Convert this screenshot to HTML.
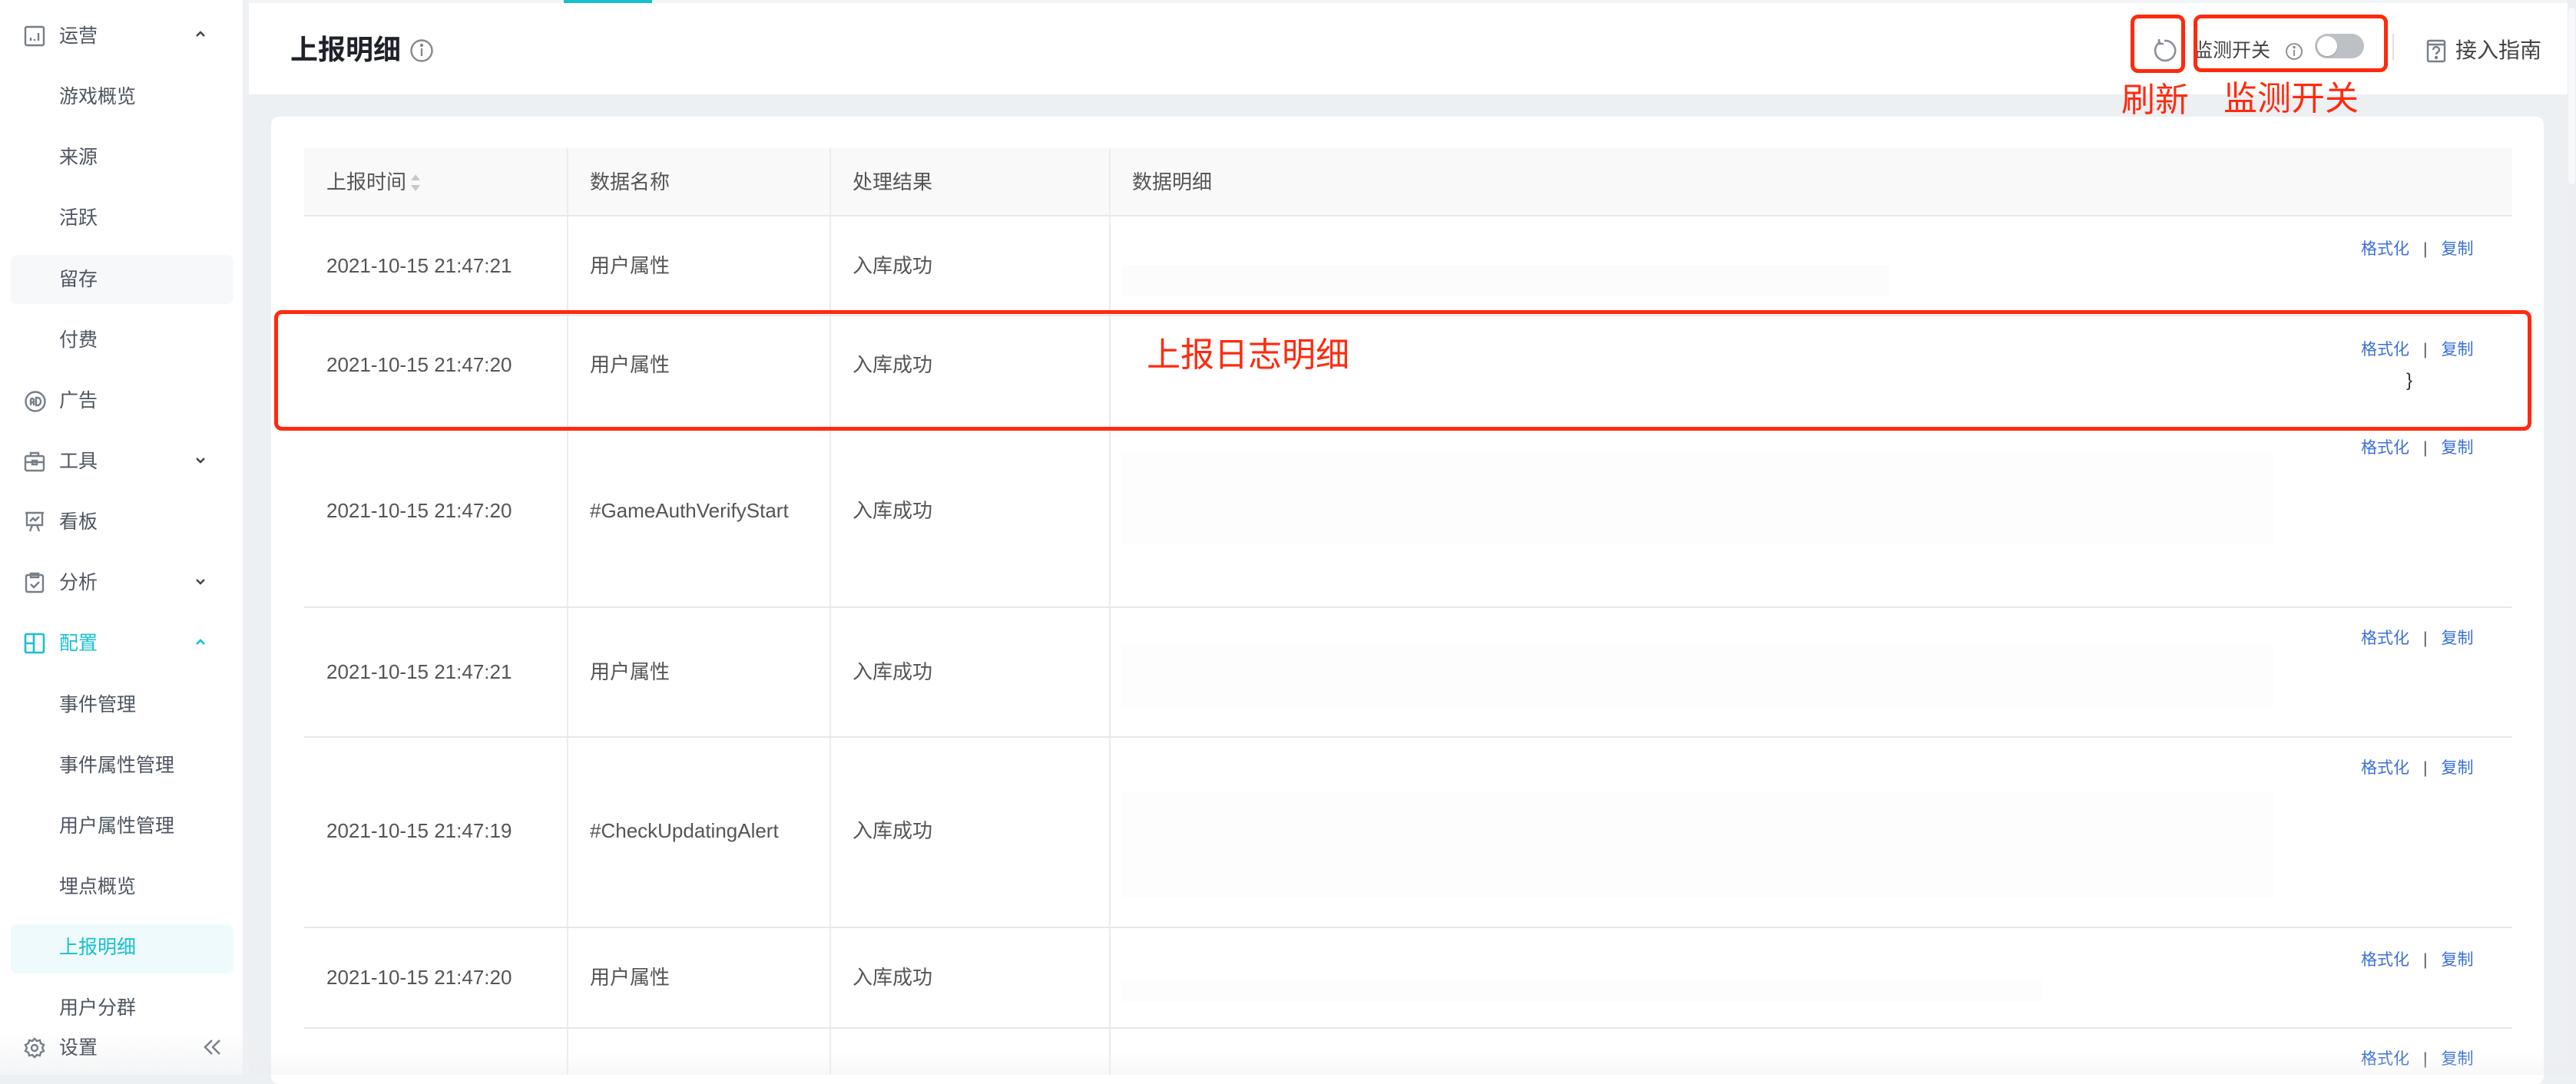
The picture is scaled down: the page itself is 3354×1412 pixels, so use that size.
<!DOCTYPE html>
<html><head><meta charset="utf-8"><style>
*{margin:0;padding:0;box-sizing:border-box}
body{width:3354px;height:1400px;overflow:hidden;background:#edf0f3;font-family:"Liberation Sans","Noto Sans CJK SC",sans-serif;position:relative;color:#333}
.a{position:absolute;white-space:nowrap}
.side{position:absolute;left:0;top:0;width:316px;height:1400px;background:#fff}
.si{position:absolute;left:77px;font-size:25px;color:#4e5560;line-height:40px}
.ic{position:absolute;left:31px}
.arr{position:absolute;left:252px}
.hd{position:absolute;left:324px;top:4px;width:3019px;height:119px;background:#fff}
.card{position:absolute;left:353px;top:152px;width:2959px;height:1260px;background:#fff;border-radius:10px}
.th{position:absolute;top:193px;height:89px;background:#f9f9f9;left:396px;width:2875px;border-bottom:2px solid #e8e8e8}
.tt{position:absolute;font-size:26px;color:#555;line-height:30px}
.rl{position:absolute;left:396px;width:2875px;height:2px;background:#e8e8e8}
.vl{position:absolute;width:2px;background:#ececec;top:193px;height:1207px}
.lk{position:absolute;left:3074px;font-size:21px;color:#3b6fd8;line-height:24px}
.lk span{color:#555;margin:0 18px}
.red{position:absolute;border:5px solid #ff2a0e;border-radius:10px}
.rt{position:absolute;color:#ff2a0e;font-size:44px;line-height:50px}
.blk{position:absolute;background:#f7f7f8}
</style></head><body>
<div class="a" style="left:0;top:0;width:3354px;height:4px;background:#f2f5f7"></div>
<div class="a" style="left:734px;top:0;width:115px;height:4px;background:#18c0cf"></div>
<div class="side"></div>
<div class="a" style="left:316px;top:0;width:8px;height:1400px;background:#eef0f3"></div>
<div class="a" style="left:14px;top:332px;width:290px;height:64px;background:#f7f8fa;border-radius:8px"></div>
<div class="a" style="left:14px;top:1204px;width:290px;height:64px;background:#effafc;border-radius:8px"></div>

<svg class="ic" style="top:33px" width="28" height="28" viewBox="0 0 28 28" fill="none" stroke="#777e88" stroke-width="2.4"><rect x="2" y="2" width="24" height="24" rx="2"/><path d="M9 20v-4M14 20v-2M19 20V10"/></svg>
<div class="si" style="top:27px">运营</div>
<svg class="arr" style="top:38px" width="18" height="12" viewBox="0 0 18 12" fill="none" stroke="#444" stroke-width="2.4"><path d="M4 9l5-5 5 5"/></svg>
<div class="si" style="top:106px">游戏概览</div>
<div class="si" style="top:185px">来源</div>
<div class="si" style="top:264px">活跃</div>
<div class="si" style="top:344px">留存</div>
<div class="si" style="top:423px">付费</div>
<svg class="ic" style="top:508px" width="30" height="30" viewBox="0 0 30 30" fill="none" stroke="#777e88" stroke-width="2.4"><circle cx="15" cy="15" r="12.5"/><path d="M9 20v-7a2 2 0 014 0v7M9 16h4M16 10v10h2a4 5 0 000-10z"/></svg>
<div class="si" style="top:502px">广告</div>
<svg class="ic" style="top:587px" width="28" height="28" viewBox="0 0 28 28" fill="none" stroke="#777e88" stroke-width="2.4"><rect x="2" y="7" width="24" height="19" rx="2"/><path d="M9 7V3h10v4M2 15h24"/><rect x="11" y="13" width="6" height="5"/></svg>
<div class="si" style="top:581px">工具</div>
<svg class="arr" style="top:594px" width="18" height="12" viewBox="0 0 18 12" fill="none" stroke="#444" stroke-width="2.4"><path d="M4 3l5 5 5-5"/></svg>
<svg class="ic" style="top:666px" width="28" height="28" viewBox="0 0 28 28" fill="none" stroke="#777e88" stroke-width="2.4"><path d="M2 2h24M4 2v16h20V2M8 13l4-4 3 3 5-5M8 26l3-8M20 26l-3-8"/></svg>
<div class="si" style="top:660px">看板</div>
<svg class="ic" style="top:745px" width="28" height="28" viewBox="0 0 28 28" fill="none" stroke="#777e88" stroke-width="2.4"><rect x="3" y="4" width="22" height="22" rx="2"/><path d="M9 2h10v5H9zM9 16l4 4 7-7"/></svg>
<div class="si" style="top:739px">分析</div>
<svg class="arr" style="top:752px" width="18" height="12" viewBox="0 0 18 12" fill="none" stroke="#444" stroke-width="2.4"><path d="M4 3l5 5 5-5"/></svg>
<svg class="ic" style="top:824px" width="28" height="28" viewBox="0 0 28 28" fill="none" stroke="#18c0cf" stroke-width="2.6"><rect x="2" y="2" width="24" height="24" rx="2"/><path d="M13 2v24M2 14h11"/></svg>
<div class="si" style="top:818px;color:#18c0cf">配置</div>
<svg class="arr" style="top:830px" width="18" height="12" viewBox="0 0 18 12" fill="none" stroke="#18c0cf" stroke-width="2.6"><path d="M4 9l5-5 5 5"/></svg>
<div class="si" style="top:898px">事件管理</div>
<div class="si" style="top:977px">事件属性管理</div>
<div class="si" style="top:1056px">用户属性管理</div>
<div class="si" style="top:1135px">埋点概览</div>
<div class="si" style="top:1214px;color:#18c0cf">上报明细</div>
<div class="si" style="top:1293px">用户分群</div>
<div class="a" style="left:0;top:1330px;width:316px;height:70px;background:linear-gradient(#fff 0,#fff 20%,#f4f5f6 100%)"></div>
<svg class="ic" style="left:31px;top:1351px" width="28" height="28" viewBox="0 0 28 28" fill="none" stroke="#777e88" stroke-width="2.4"><path d="M14 2l3 3 4-1 1 4 4 2-2 4 2 4-4 2-1 4-4-1-3 3-3-3-4 1-1-4-4-2 2-4-2-4 4-2 1-4 4 1z"/><circle cx="14" cy="14" r="4"/></svg>
<div class="si" style="top:1345px">设置</div>
<svg class="a" style="left:264px;top:1352px" width="26" height="24" viewBox="0 0 26 24" fill="none" stroke="#777e88" stroke-width="2.4"><path d="M12 3L3 12l9 9M22 3l-9 9 9 9"/></svg>

<div class="hd"></div>
<div class="a" style="left:378px;top:44px;font-size:36px;font-weight:bold;color:#1f2329;line-height:42px">上报明细</div>
<svg class="a" style="left:533px;top:50px" width="32" height="32" viewBox="0 0 32 32" fill="none" stroke="#888" stroke-width="2.4"><circle cx="16" cy="16" r="13.5"/><path d="M16 13v10"/><circle cx="16" cy="9" r="1" fill="#888"/></svg>
<svg class="a" style="left:2801px;top:49px" width="34" height="34" viewBox="0 0 34 34" fill="none" stroke="#8a9099" stroke-width="2.6"><path d="M12 5.5A13 13 0 1 0 17 4M10 2v6h6"/></svg>
<div class="a" style="left:2856px;top:50px;font-size:25px;color:#444;line-height:32px">监测开关</div>
<svg class="a" style="left:2975px;top:55px" width="24" height="24" viewBox="0 0 24 24" fill="none" stroke="#888" stroke-width="1.8"><circle cx="12" cy="12" r="10"/><path d="M12 10v8"/><circle cx="12" cy="6.5" r=".8" fill="#888"/></svg>
<div class="a" style="left:3014px;top:44px;width:64px;height:32px;background:#bdc1c5;border-radius:16px"></div>
<div class="a" style="left:3017px;top:47px;width:26px;height:26px;background:#fff;border-radius:13px;box-shadow:0 1px 2px rgba(0,0,0,.2)"></div>
<div class="a" style="left:3115px;top:44px;width:2px;height:34px;background:#dcdfe3"></div>
<svg class="a" style="left:3159px;top:50px" width="26" height="32" viewBox="0 0 26 32" fill="none" stroke="#777e88" stroke-width="2.4"><rect x="2" y="3" width="22" height="27" rx="2"/><path d="M2 8h22M9 15a4 4 0 118 0c0 3-4 3-4 6"/><circle cx="13" cy="25" r="1" fill="#777e88"/></svg>
<div class="a" style="left:3197px;top:49px;font-size:28px;color:#444;line-height:34px">接入指南</div>
<div class="a" style="left:3343px;top:0;width:11px;height:1400px;background:#eceef1"></div>
<div class="a" style="left:3344px;top:10px;width:9px;height:230px;background:#f7f8f9;border-radius:4px"></div>

<div class="card"></div>
<div class="th"></div>
<div class="vl" style="left:738px"></div><div class="vl" style="left:1080px"></div><div class="vl" style="left:1444px"></div>
<div class="tt" style="left:425px;top:222px">上报时间</div>
<svg class="a" style="left:533px;top:225px" width="16" height="26" viewBox="0 0 16 26"><path d="M8 2l6 8H2z" fill="#c6c9cc"/><path d="M8 24l6-8H2z" fill="#c6c9cc"/></svg>
<div class="tt" style="left:768px;top:222px">数据名称</div>
<div class="tt" style="left:1110px;top:222px">处理结果</div>
<div class="tt" style="left:1474px;top:222px">数据明细</div>

<div class="rl" style="top:410px"></div><div class="rl" style="top:559px"></div><div class="rl" style="top:790px"></div><div class="rl" style="top:959px"></div><div class="rl" style="top:1207px"></div><div class="rl" style="top:1338px"></div>

<div class="tt" style="left:425px;top:331px">2021-10-15 21:47:21</div><div class="tt" style="left:768px;top:331px">用户属性</div><div class="tt" style="left:1110px;top:331px">入库成功</div>
<div class="tt" style="left:425px;top:460px">2021-10-15 21:47:20</div><div class="tt" style="left:768px;top:460px">用户属性</div><div class="tt" style="left:1110px;top:460px">入库成功</div>
<div class="tt" style="left:425px;top:650px">2021-10-15 21:47:20</div><div class="tt" style="left:768px;top:650px">#GameAuthVerifyStart</div><div class="tt" style="left:1110px;top:650px">入库成功</div>
<div class="tt" style="left:425px;top:860px">2021-10-15 21:47:21</div><div class="tt" style="left:768px;top:860px">用户属性</div><div class="tt" style="left:1110px;top:860px">入库成功</div>
<div class="tt" style="left:425px;top:1067px">2021-10-15 21:47:19</div><div class="tt" style="left:768px;top:1067px">#CheckUpdatingAlert</div><div class="tt" style="left:1110px;top:1067px">入库成功</div>
<div class="tt" style="left:425px;top:1258px">2021-10-15 21:47:20</div><div class="tt" style="left:768px;top:1258px">用户属性</div><div class="tt" style="left:1110px;top:1258px">入库成功</div>

<div class="lk" style="top:313px">格式化<span>|</span>复制</div>
<div class="lk" style="top:444px">格式化<span>|</span>复制</div>
<div class="a" style="left:3133px;top:482px;font-size:24px;color:#333">}</div>
<div class="lk" style="top:572px">格式化<span>|</span>复制</div>
<div class="lk" style="top:820px">格式化<span>|</span>复制</div>
<div class="lk" style="top:989px">格式化<span>|</span>复制</div>
<div class="lk" style="top:1239px">格式化<span>|</span>复制</div>
<div class="lk" style="top:1368px">格式化<span>|</span>复制</div>

<div class="blk" style="left:1460px;top:345px;width:1000px;height:40px;opacity:.35"></div>
<div class="blk" style="left:1460px;top:590px;width:1500px;height:120px;opacity:.3"></div>
<div class="blk" style="left:1460px;top:840px;width:1500px;height:80px;opacity:.3"></div>
<div class="blk" style="left:1460px;top:1030px;width:1500px;height:140px;opacity:.3"></div>
<div class="blk" style="left:1460px;top:1275px;width:1200px;height:30px;opacity:.3"></div>
<div class="a" style="left:324px;top:1370px;width:3019px;height:30px;background:linear-gradient(rgba(240,240,240,0),rgba(235,235,235,.35))"></div>

<div class="red" style="left:2774px;top:19px;width:71px;height:76px"></div>
<div class="red" style="left:2856px;top:19px;width:253px;height:75px"></div>
<div class="red" style="left:357px;top:404px;width:2939px;height:157px"></div>
<div class="rt" style="left:2762px;top:106px">刷新</div>
<div class="rt" style="left:2895px;top:104px">监测开关</div>
<div class="rt" style="left:1493px;top:438px">上报日志明细</div>
</body></html>
